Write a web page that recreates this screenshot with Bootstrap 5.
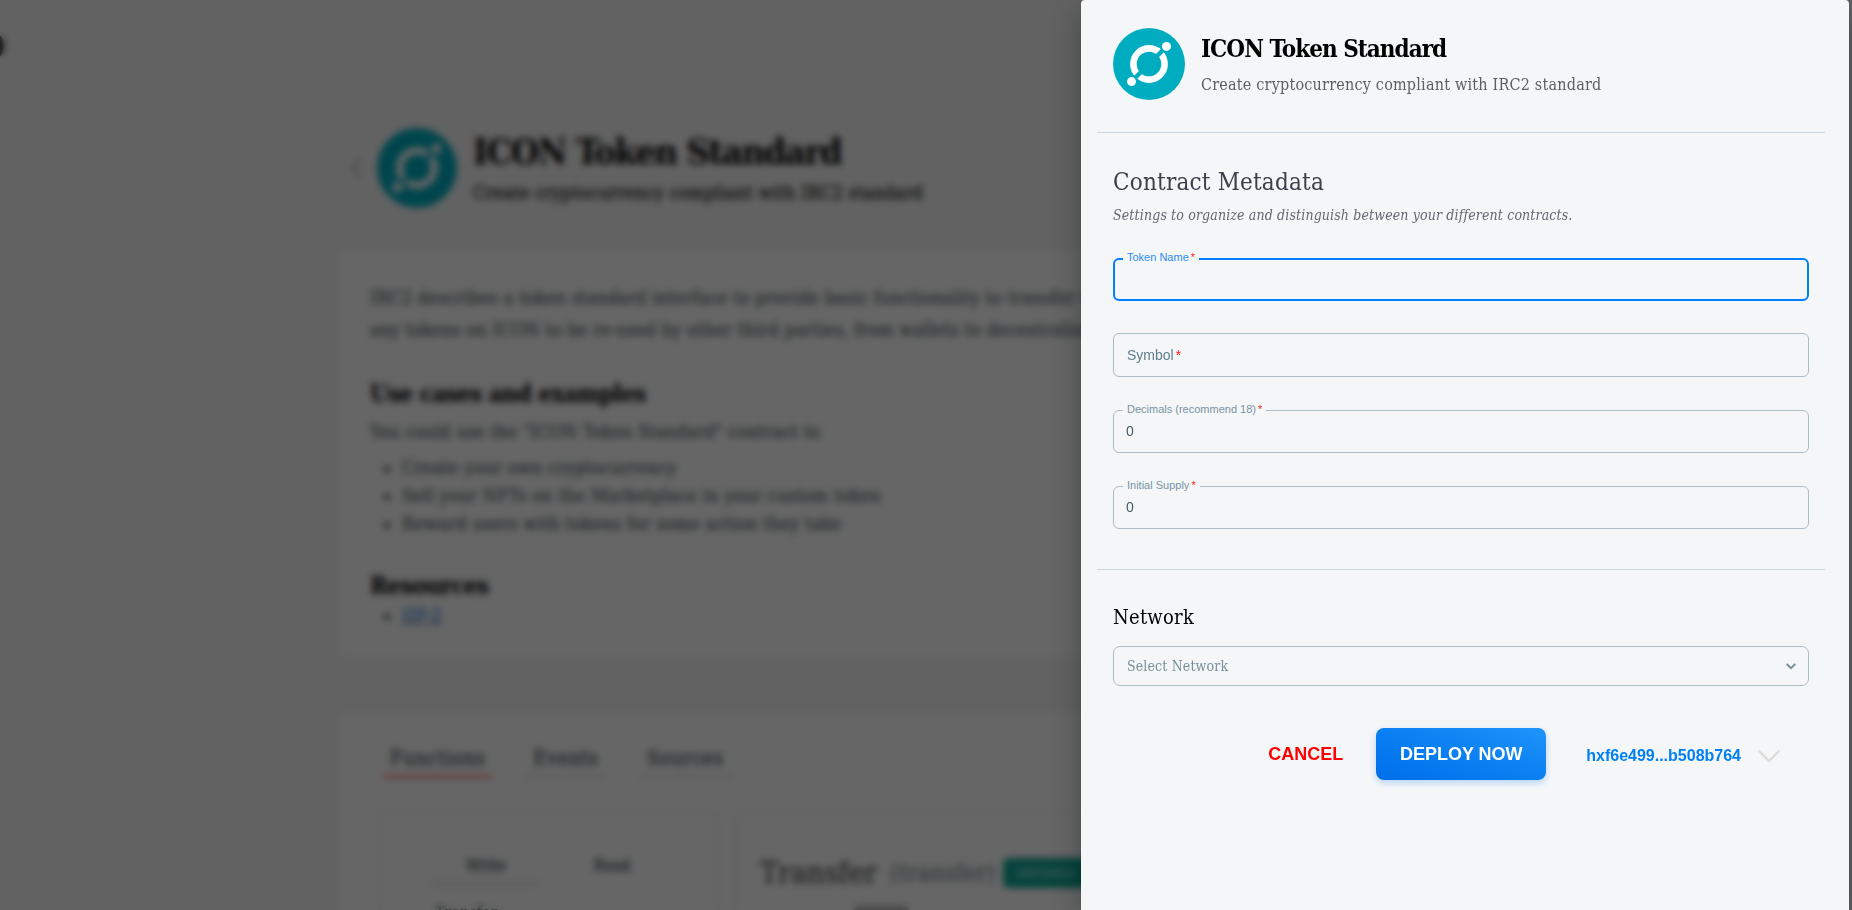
<!DOCTYPE html>
<html lang="en">
<head>
<meta charset="utf-8">
<meta name="viewport" content="width=device-width, initial-scale=1">
<title>ICON Token Standard</title>
<link href="https://cdn.jsdelivr.net/npm/bootstrap@5.3.0/dist/css/bootstrap.min.css" rel="stylesheet">
<style>
body{height:910px;overflow:hidden;background:#f5f5f5;font-family:"Roboto Slab","DejaVu Serif Condensed","DejaVu Serif",serif;font-stretch:condensed;color:#000}
/* page behind the drawer */
.backdrop-page{height:910px;overflow:hidden;color:#455056;position:relative}
.brand-edge{position:absolute;left:-24px;top:17px;font-size:50px;font-weight:700;line-height:50px;color:#333}
.page-col{margin-left:340px;width:1172px;padding-top:126px}
.page-head{height:84px;margin-left:12px;margin-bottom:41px}
.page-head svg + svg{margin:0 16px 0 15px}
.page-title{font-size:36px;line-height:50px;font-weight:700;color:#000;letter-spacing:-1.45px;margin-top:-2px}
.page-sub{font-size:18px;line-height:32px;color:#111;letter-spacing:.23px;-webkit-text-stroke:.3px #111;position:relative;top:1px}
.panel{background:#fff;border-radius:6px}
.panel-info{height:406px;padding:31px 30px;font-size:18px;letter-spacing:.24px;-webkit-text-stroke:.2px #455056}
.panel-info p{line-height:32px;margin:0}
.panel-info .lead-in{line-height:32px;margin:6px 0;letter-spacing:.18px}
.panel-info h3{font-size:24px;line-height:32px;font-weight:700;color:#000;letter-spacing:-.64px;margin:32px 0 0}
.panel-info ul{margin:0;padding-left:32px}
.panel-info li{line-height:28px}
.panel-info a{color:#0a84ff}
.panel-fn{margin-top:56px;height:400px;padding:29px 38px}
.tab-row{gap:34px;margin-left:5px}
.tab-item{font-size:20px;line-height:32px;height:36px;border-bottom:3px solid #e4e4e4;padding:0 7px;color:#37474f;letter-spacing:.55px;-webkit-text-stroke:.3px #37474f}
.tab-item.on{border-color:#ff7b7b}
.fn-row{gap:15px;margin-top:34px}
.fn-card{border:3px solid #f6f6f6;border-radius:6px;height:300px}
.fn-list{width:341px;padding:35px 50px 0}
.fn-detail{width:760px;padding:36px 23px 0}
.sub-tab{width:110px;flex:none;font-size:16px;line-height:32px;height:35px;text-align:center;color:#37474f;-webkit-text-stroke:.3px #37474f}
.sub-tab.on{border-bottom:3px solid #e2e2e2}
.fn-name{font-size:30px;line-height:44px;color:#333}
.fn-sign{font-size:24px;line-height:44px;color:#6b767b;margin-left:13px}
.fn-badge{background:#0fa897;color:#9fe0d8;border-radius:6px;width:130px;padding-left:14px;margin-left:8px;font:700 11px/30px "Liberation Sans",sans-serif}
.fn-chip{width:56px;height:24px;border-radius:6px;background:#bbb;margin:10px 0 0 93px}
.veil{position:fixed;inset:0;background:rgba(0,0,0,.6);backdrop-filter:blur(3.7px)}
/* drawer */
.drawer{position:fixed;top:0;bottom:0;right:3px;width:768px;background:#f4f6f8;border-radius:4px 4px 0 0;box-shadow:0 10px 30px rgba(0,0,0,.3);padding:28px 24px 0 16px}
.inset{padding:0 16px}
.rule{height:1px;background:#c8d6dd}
.rule-net{margin-top:40px;background:#ccd5da}
.d-title{font-size:24px;line-height:34px;font-weight:700;letter-spacing:-.98px;margin-top:4px}
.d-sub{font-size:16px;line-height:26px;color:#5f5f5f;letter-spacing:.21px;margin-top:6px}
.d-head{height:72px;margin-bottom:32px}
.d-h{font-size:24px;line-height:32px;color:#3a414b;letter-spacing:.2px;margin-top:33px}
.d-note{font-size:14px;line-height:22px;font-style:italic;color:#62686f;letter-spacing:.14px;margin:6px 0 0}
.field{height:44px;border:1px solid #aabcc6;border-radius:6px;position:relative;font-family:"Liberation Sans",Arial,sans-serif;font-size:14px;color:#455a64;padding-left:12px;line-height:42px;margin-top:32px}
.field.up{height:43px;line-height:40px;margin-top:33px}
.field.on{border:2px solid #0080ff;margin-top:32px}
.field.plain{padding-left:13px;color:#607d8b}
.field .cap{position:absolute;left:9px;top:-10px;height:16px;line-height:16px;padding:0 4px 0 4px;background:#f4f6f8;font-size:11px;color:#7894a3;white-space:nowrap}
.field.on .cap{left:8px;top:-11px;color:#2b8cf0}
.req{color:#ff1a1a;margin-left:2px}
.net-h{font-size:20px;line-height:28px;letter-spacing:.25px;margin:33px 0 15px}
.net-select{height:40px;border:1px solid #aabcc6;border-radius:7px;font-size:14px;letter-spacing:.14px;color:#78909c;padding:0 12px 0 13px}
.actions{font-family:"Liberation Sans",Arial,sans-serif;font-weight:700;height:52px;margin-top:42px;padding-right:44px}
.btn-cancel{color:red;font-size:18px;margin-right:33px}
.btn-deploy{width:170px;height:52px;border:0;border-radius:8px;color:#fff;font:700 18px "Liberation Sans",Arial,sans-serif;background:linear-gradient(to top right,#006eeb,#0a80f2 50%,#1e94fb);box-shadow:0 3px 6px rgba(0,114,236,.25);margin-right:40px}
.addr{color:#0080f5;font-size:16px;margin:3px 16px 0 0}
</style>
</head>
<body>
<svg width="0" height="0" class="position-absolute"><defs>
<symbol id="icx" viewBox="0 0 72 72"><circle cx="36" cy="36" r="36" fill="#00adc0"/><circle cx="36" cy="36" r="15.6" fill="none" stroke="#fff" stroke-width="6.6"/><path d="M44 28L54 18M28 44L18 54" stroke="#00adc0" stroke-width="4.4"/><circle cx="53.5" cy="18.4" r="4.5" fill="#fff"/><circle cx="18.5" cy="53.6" r="4.5" fill="#fff"/></symbol>
</defs></svg>

<div class="backdrop-page">
  <div class="brand-edge">o</div>
  <div class="page-col">
    <div class="page-head d-flex align-items-center text-nowrap">
      <svg width="10" height="20" viewBox="0 0 10 20"><path d="M9 1L1 10l8 9" fill="none" stroke="#aaa" stroke-width="2"/></svg>
      <svg width="80" height="80" class="flex-shrink-0"><use href="#icx"/></svg>
      <div>
        <div class="page-title">ICON Token Standard</div>
        <div class="page-sub">Create cryptocurrency compliant with IRC2 standard</div>
      </div>
    </div>
    <div class="panel panel-info text-nowrap">
      <p>IRC2 describes a token standard interface to provide basic functionality to transfer t</p>
      <p>any tokens on ICON to be re-used by other third parties, from wallets to decentralize</p>
      <h3>Use cases and examples</h3>
      <p class="lead-in">You could use the "ICON Token Standard" contract to</p>
      <ul>
        <li>Create your own cryptocurrency</li>
        <li>Sell your NFTs on the Marketplace in your custom token</li>
        <li>Reward users with tokens for some action they take</li>
      </ul>
      <h3>Resources</h3>
      <ul><li><a href="#">IIP-2</a></li></ul>
    </div>
    <div class="panel panel-fn">
      <div class="tab-row d-flex">
        <div class="tab-item on">Functions</div>
        <div class="tab-item">Events</div>
        <div class="tab-item">Sources</div>
      </div>
      <div class="fn-row d-flex text-nowrap">
        <div class="fn-card fn-list flex-shrink-0">
          <div class="d-flex gap-3"><div class="sub-tab on">Write</div><div class="sub-tab">Read</div></div>
          <div class="mt-3 ps-1">Transfer</div>
        </div>
        <div class="fn-card fn-detail">
          <div class="d-flex align-items-center">
            <div class="fn-name">Transfer</div><div class="fn-sign">(transfer)</div><div class="fn-badge">WRITABLE</div>
          </div>
          <div class="fn-chip"></div>
        </div>
      </div>
    </div>
  </div>
</div>
<div class="veil"></div>

<div class="drawer">
  <div class="inset d-head d-flex">
    <svg width="72" height="72" class="me-3"><use href="#icx"/></svg>
    <div class="text-nowrap">
      <div class="d-title">ICON Token Standard</div>
      <div class="d-sub">Create cryptocurrency compliant with IRC2 standard</div>
    </div>
  </div>
  <div class="rule"></div>
  <div class="inset">
    <div class="d-h">Contract Metadata</div>
    <div class="d-note">Settings to organize and distinguish between your different contracts.</div>
    <div class="field up on"><span class="cap">Token Name<span class="req">*</span></span></div>
    <div class="field plain">Symbol<span class="req">*</span></div>
    <div class="field up"><span class="cap">Decimals (recommend 18)<span class="req">*</span></span>0</div>
    <div class="field up"><span class="cap">Initial Supply<span class="req">*</span></span>0</div>
  </div>
  <div class="rule rule-net"></div>
  <div class="inset">
    <div class="net-h">Network</div>
    <div class="net-select d-flex align-items-center justify-content-between">
      <span>Select Network</span>
      <svg width="10" height="7" viewBox="0 0 10 7"><path d="M.7 1L5 5.2 9.3 1" fill="none" stroke="#78909c" stroke-width="2"/></svg>
    </div>
  </div>
  <div class="actions d-flex align-items-center justify-content-end">
    <span class="btn-cancel">CANCEL</span>
    <button class="btn-deploy p-0">DEPLOY NOW</button>
    <span class="addr">hxf6e499...b508b764</span>
    <svg width="24" height="14" viewBox="0 0 24 14" class="mt-1"><path d="M1.5 1.5L12 12 22.500 1.500" fill="none" stroke="#dcd9d8" stroke-width="2"/></svg>
  </div>
</div>
<script src="https://cdn.jsdelivr.net/npm/bootstrap@5.3.0/dist/js/bootstrap.bundle.min.js"></script>
</body>
</html>
